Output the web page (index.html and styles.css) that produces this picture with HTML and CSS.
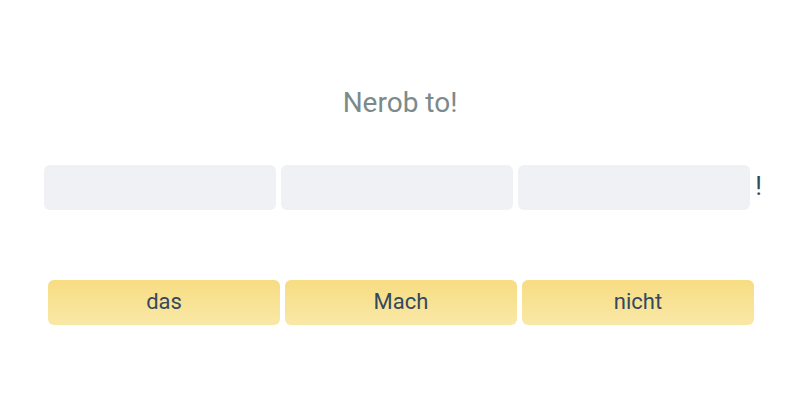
FILE: index.html
```html
<!DOCTYPE html>
<html lang="en">

<head>
    <meta charset="UTF-8">
    <meta name="viewport" content="width=device-width, initial-scale=1">
    <title>Sentence builder</title>
    <link rel="stylesheet" href="styles.css">
</head>

<body>
<div class="exercise">
    <!-- prompt -->
    <div class="prompt">Nerob to!</div>
    <!-- answer slots -->
    <div class="slots">
        <div class="slot"></div>
        <div class="slot"></div>
        <div class="slot"></div>
        <span class="punct">!</span>
    </div>
    <!-- word bank -->
    <div class="words">
        <div class="word">das</div>
        <div class="word">Mach</div>
        <div class="word">nicht</div>
    </div>
</div>
</body>

</html>
```

FILE: styles.css
```css
body {
    margin: 0;
    background-color: #fff;
    font-family: Roboto, "Liberation Sans", sans-serif;
}

.exercise {
    width: 800px;
    height: 400px;
    display: flex;
    flex-direction: column;
    align-items: center;
}

.prompt {
    margin-top: 86px;
    height: 34px;
    line-height: 34px;
    font-size: 28px;
    color: #7b8a8b;
}

.slots {
    margin-top: 45px;
    display: flex;
    align-items: center;
    gap: 5px;
    padding-left: 6px;
}

.slot {
    width: 232px;
    height: 45px;
    border-radius: 6px;
    background-color: #eff1f5;
}

.punct {
    font-size: 26px;
    color: #34495e;
    margin-top: -4px;
}

.words {
    margin-top: 70px;
    display: flex;
    gap: 5px;
    padding-left: 2px;
}

.word {
    width: 232px;
    height: 45px;
    line-height: 44px;
    text-align: center;
    border-radius: 6px;
    font-size: 22px;
    color: #34495e;
    background: linear-gradient(#f7dc82, #f9e8a6);
}
```
